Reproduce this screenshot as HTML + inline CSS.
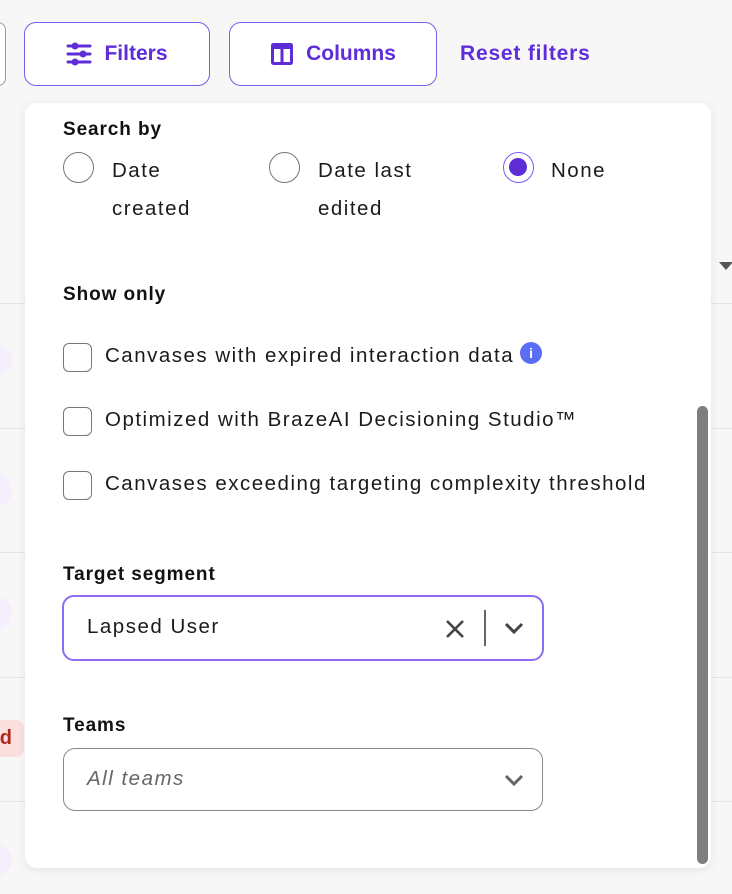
<!DOCTYPE html>
<html><head><meta charset="utf-8"><style>
*{box-sizing:border-box;margin:0;padding:0}
body{width:732px;height:894px;background:#f7f7f8;font-family:"Liberation Sans",sans-serif;color:#1b1b1f;position:relative;overflow:hidden}
.abs{position:absolute}
.btn{position:absolute;top:22px;height:64px;border:1.5px solid #7a5cf0;border-radius:12px;background:#fff;color:#5f2dd8;font-weight:bold;font-size:21px;display:flex;align-items:center;justify-content:center;gap:12px}
.line{position:absolute;height:1px;background:#e6e6ea;left:0;width:732px}
.panel{position:absolute;left:25px;top:103px;width:686px;height:765px;background:#fff;border-radius:12px;box-shadow:0 2px 10px rgba(0,0,0,.08)}
.h{position:absolute;left:63px;font-weight:bold;font-size:19px;color:#111;letter-spacing:0.9px}
.t{position:absolute;font-size:20.5px;color:#1b1b1f;letter-spacing:1.5px}
.radio{position:absolute;width:31px;height:31px;border-radius:50%;border:1.3px solid #777;background:#fff}
.cb{position:absolute;left:63px;width:29px;height:29px;border:1.3px solid #777;border-radius:6px;background:#fff}
</style></head><body>
<div class="line" style="top:303px"></div>
<div class="line" style="top:428px"></div>
<div class="line" style="top:552px"></div>
<div class="line" style="top:677px"></div>
<div class="line" style="top:801px"></div>
<div class="abs" style="left:-10px;top:22px;width:16px;height:64px;border:1.5px solid #999;border-radius:10px;background:#fff"></div>
<div class="abs" style="left:-20px;top:720px;width:44px;height:37px;background:#fbe0e0;border-radius:8px;color:#b3261e;font-weight:bold;font-size:20px;line-height:37px;text-align:right;padding-right:12px">ed</div>
<div class="abs" style="left:-12px;top:345px;width:24px;height:30px;border-radius:50%;background:#f5effd"></div>
<div class="abs" style="left:-12px;top:475px;width:24px;height:30px;border-radius:50%;background:#f5effd"></div>
<div class="abs" style="left:-12px;top:598px;width:24px;height:30px;border-radius:50%;background:#f5effd"></div>
<div class="abs" style="left:-12px;top:845px;width:24px;height:30px;border-radius:50%;background:#f5effd"></div>
<div class="abs" style="left:719px;top:262px;width:0;height:0;border-left:7px solid transparent;border-right:7px solid transparent;border-top:8px solid #555"></div>

<div class="btn" style="left:24px;width:186px">
<svg width="26" height="24" viewBox="0 0 26 24"><g stroke="#5f2dd8" stroke-width="3" stroke-linecap="round"><line x1="2" y1="4" x2="24" y2="4"/><line x1="2" y1="12" x2="24" y2="12"/><line x1="2" y1="20" x2="24" y2="20"/></g><g fill="#5f2dd8"><circle cx="9" cy="4" r="3.5"/><circle cx="17" cy="12" r="3.5"/><circle cx="9" cy="20" r="3.5"/></g></svg>Filters</div>
<div class="btn" style="left:229px;width:208px">
<svg width="24" height="24" viewBox="0 0 24 24"><rect x="1" y="1" width="22" height="22" rx="2.5" fill="#5f2dd8"/><rect x="4" y="7" width="6.5" height="13" fill="#fff"/><rect x="13.5" y="7" width="6.5" height="13" fill="#fff"/></svg>Columns</div>
<div class="abs" style="left:460px;top:42px;color:#5f2dd8;font-weight:bold;font-size:21px;letter-spacing:0.8px">Reset filters</div>

<div class="panel"></div>
<div class="abs" style="left:697px;top:406px;width:11px;height:458px;background:#7e7e7e;border-radius:6px"></div>

<div class="h" style="top:119px">Search by</div>
<div class="radio" style="left:63px;top:152px"></div>
<div class="t" style="left:112px;top:152px;line-height:38px">Date<br>created</div>
<div class="radio" style="left:269px;top:152px"></div>
<div class="t" style="left:318px;top:152px;line-height:38px">Date last<br>edited</div>
<div class="radio" style="left:503px;top:152px;border:1.5px solid #7a5cf0"><div style="position:absolute;left:5px;top:5px;width:18px;height:18px;border-radius:50%;background:#5f2dd8"></div></div>
<div class="t" style="left:551px;top:159px">None</div>

<div class="h" style="top:284px">Show only</div>
<div class="cb" style="top:343px"></div>
<div class="t" style="left:105px;top:344px">Canvases with expired interaction data<span style="display:inline-block;vertical-align:top;margin-left:6px;margin-top:-2px;width:22px;height:22px;border-radius:50%;background:#5b6cf5;color:#fff;font-size:14px;font-weight:bold;text-align:center;line-height:22px;letter-spacing:0">i</span></div>
<div class="cb" style="top:407px"></div>
<div class="t" style="left:105px;top:408px">Optimized with BrazeAI Decisioning Studio™</div>
<div class="cb" style="top:471px"></div>
<div class="t" style="left:105px;top:472px">Canvases exceeding targeting complexity threshold</div>

<div class="h" style="top:564px">Target segment</div>
<div class="abs" style="left:62px;top:595px;width:482px;height:66px;border:2.5px solid #8c6cf5;border-radius:12px;background:#fff"></div>
<div class="t" style="left:87px;top:615px">Lapsed User</div>
<svg class="abs" style="left:444px;top:618px" width="22" height="22" viewBox="0 0 22 22"><path d="M3 3L19 19M19 3L3 19" stroke="#444" stroke-width="2.6"/></svg>
<div class="abs" style="left:484px;top:610px;width:1.5px;height:36px;background:#666"></div>
<svg class="abs" style="left:503px;top:620px" width="22" height="16" viewBox="0 0 22 16"><path d="M3 4L11 12L19 4" stroke="#444" stroke-width="3" fill="none"/></svg>

<div class="h" style="top:715px">Teams</div>
<div class="abs" style="left:63px;top:748px;width:480px;height:63px;border:1.3px solid #888;border-radius:12px;background:#fff"></div>
<div class="t" style="left:87px;top:767px;font-style:italic;color:#666">All teams</div>
<svg class="abs" style="left:503px;top:772px" width="22" height="16" viewBox="0 0 22 16"><path d="M3 4L11 12L19 4" stroke="#666" stroke-width="3" fill="none"/></svg>
</body></html>
